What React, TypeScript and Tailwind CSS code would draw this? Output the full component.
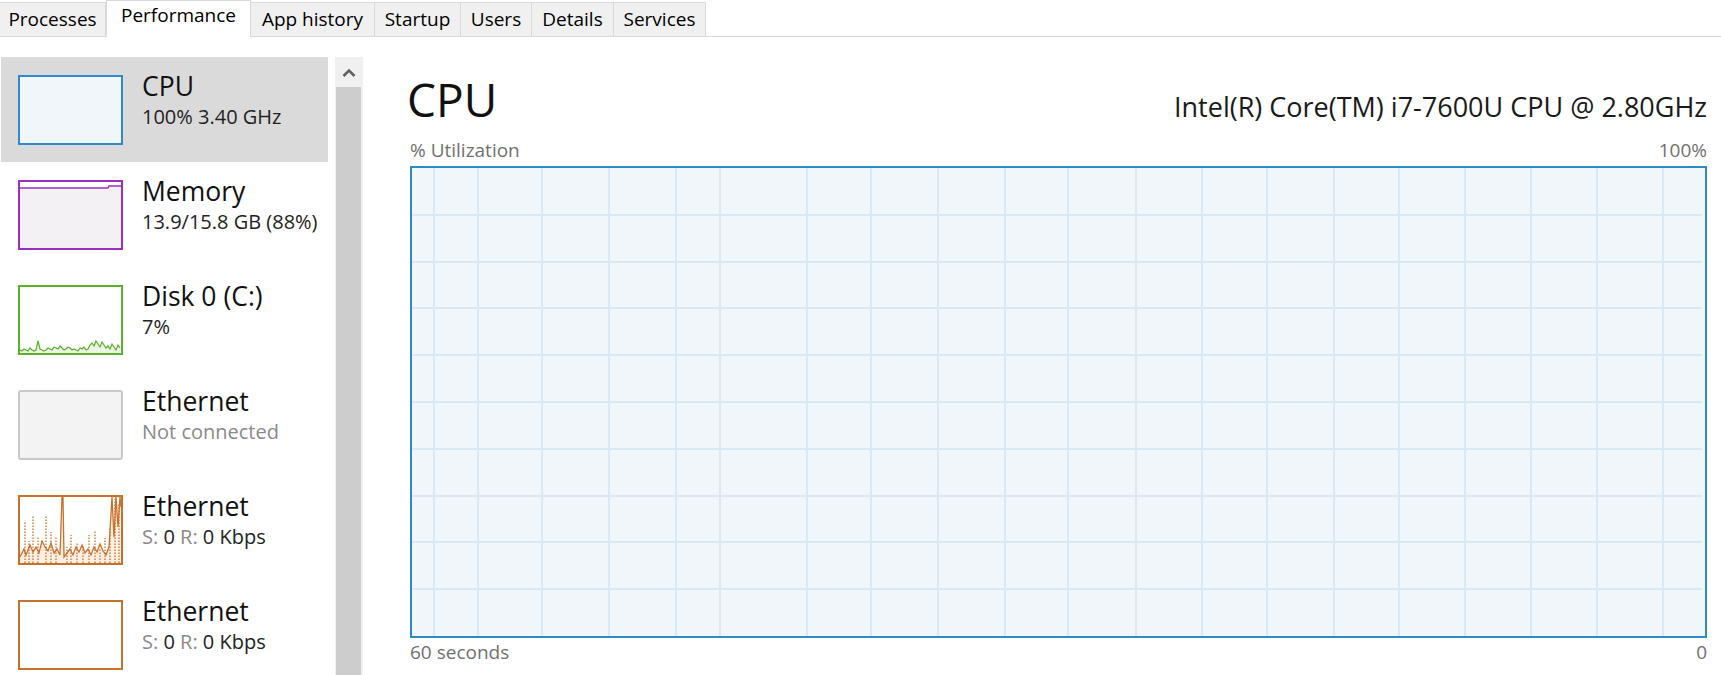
import React from "react";

const TABS = [
  { label: "Processes", w: "w-[106px]" },
  { label: "Performance", w: "w-[145px]", active: true },
  { label: "App history", w: "w-[124px]" },
  { label: "Startup", w: "w-[86px]" },
  { label: "Users", w: "w-[71px]" },
  { label: "Details", w: "w-[82px]" },
  { label: "Services", w: "w-[92px]" },
];

// grid positions inside the big chart (inner box 1293 x 468)
const VLINES = [22, 66, 130, 197, 264, 308, 395, 459, 526, 593, 656, 724, 790, 855, 922, 987, 1053, 1119, 1185, 1251];
const HLINES = [47, 94, 140, 187, 234, 281, 328, 374, 421];

const DISK = [3, 2, 4, 3, 2, 5, 3, 2, 3, 12, 4, 3, 2, 3, 5, 4, 3, 6, 5, 4, 7, 5, 3, 4, 6, 5, 3, 4, 3, 2, 5, 4, 6, 3, 4, 8, 10, 7, 12, 9, 6, 11, 8, 5, 7, 4, 9, 6, 3, 8, 5];

const ETH_SOLID: [number, number][] = [
  [0, 60], [4, 52], [6, 58], [10, 48], [13, 55], [16, 50], [19, 56], [22, 44], [25, 50], [28, 54],
  [31, 46], [34, 56], [37, 52], [40, 58], [42, 0], [43, 0], [44, 60], [47, 56], [50, 52], [53, 58],
  [56, 50], [59, 55], [62, 48], [65, 56], [68, 52], [71, 58], [74, 50], [77, 55], [80, 47], [83, 54],
  [86, 58], [89, 50], [92, 0], [94, 40], [96, 0], [98, 30], [100, 0], [101, 10],
];

const ETH_DOTTED: [number, number][] = [
  [5, 25], [9, 44], [13, 18], [18, 40], [26, 18], [31, 35], [36, 40], [47, 50], [51, 38], [57, 45],
  [63, 48], [69, 38], [75, 33], [80, 52], [85, 41], [90, 30], [95, 2], [99, 6],
];

function Thumb({ kind }: { kind: string }) {
  if (kind === "cpu") {
    return <div className="h-[70px] w-[105px] border-2 border-[#2e8bc8] bg-[#f1f6fa]" />;
  }
  if (kind === "mem") {
    return (
      <div className="h-[70px] w-[105px] border-2 border-[#9b2fbf] bg-white">
        <svg width="101" height="66" className="block">
          <polygon points="0,6 88,6 89,4 101,4 101,66 0,66" fill="#f4f1f5" />
          <polyline points="0,6 88,6 89,4 101,4" fill="none" stroke="#9b2fbf" strokeWidth="1.5" />
        </svg>
      </div>
    );
  }
  if (kind === "disk") {
    const pts = DISK.map((v, i) => `${i * 2},${66 - v}`).join(" ");
    return (
      <div className="h-[70px] w-[105px] border-2 border-[#5bb02a] bg-white">
        <svg width="101" height="66" className="block">
          <polygon points={`0,66 ${pts} 100,66`} fill="#edf6e4" />
          <polyline points={pts} fill="none" stroke="#5bb02a" strokeWidth="1.2" />
        </svg>
      </div>
    );
  }
  if (kind === "off") {
    return <div className="h-[70px] w-[105px] rounded-[3px] border-2 border-[#c9c9c9] bg-[#f3f3f3]" />;
  }
  if (kind === "eth") {
    const pts = ETH_SOLID.map(([x, y]) => `${x},${y}`).join(" ");
    return (
      <div className="h-[70px] w-[105px] border-2 border-[#c8712c] bg-white">
        <svg width="101" height="66" className="block">
          <polygon points={`0,66 ${pts} 101,66`} fill="#fcefe3" />
          {ETH_DOTTED.map(([x, y]) => (
            <line key={x} x1={x} y1={66} x2={x} y2={y} stroke="#d07a36" strokeWidth="1.4" strokeDasharray="1.5 1.5" />
          ))}
          <polyline points={pts} fill="none" stroke="#c8712c" strokeWidth="1.3" />
        </svg>
      </div>
    );
  }
  return <div className="h-[70px] w-[105px] border-2 border-[#c8712c] bg-white" />;
}

function NetSub() {
  return (
    <>
      <span className="text-[#8a8a8a]">S:</span> 0 <span className="text-[#8a8a8a]">R:</span> 0 Kbps
    </>
  );
}

const ITEMS = [
  { kind: "cpu", name: "CPU", sub: <>100% 3.40 GHz</>, selected: true },
  { kind: "mem", name: "Memory", sub: <>13.9/15.8 GB (88%)</> },
  { kind: "disk", name: "Disk 0 (C:)", sub: <>7%</> },
  { kind: "off", name: "Ethernet", sub: <span className="text-[#8a8a8a]">Not connected</span> },
  { kind: "eth", name: "Ethernet", sub: <NetSub /> },
  { kind: "eth2", name: "Ethernet", sub: <NetSub /> },
];

function SideItem({ item }: { item: (typeof ITEMS)[number] }) {
  return (
    <div className={`flex h-[105px] shrink-0 ${item.selected ? "bg-[#dadada]" : ""}`}>
      <div className="ml-[17px] mt-[18px]">
        <Thumb kind={item.kind} />
      </div>
      <div className="ml-[19px] pt-[16px]">
        <div className="text-[26.5px] leading-[26px] text-[#111]">{item.name}</div>
        <div className="mt-[8px] text-[20px] leading-[20px] text-[#222]">{item.sub}</div>
      </div>
    </div>
  );
}

export default function App() {
  return (
    <div className="flex h-[675px] w-[1721px] flex-col overflow-hidden bg-white font-['Open_Sans',sans-serif] text-black">
      <div className="flex h-[37px] shrink-0 items-end border-b border-[#d9d9d9]">
        {TABS.map((t) =>
          t.active ? (
            <div
              key={t.label}
              className={`relative -mb-px flex h-[37px] ${t.w} justify-center border-x border-t border-[#d9d9d9] bg-white pt-[5px] text-[19px] leading-[19px]`}
            >
              {t.label}
            </div>
          ) : (
            <div
              key={t.label}
              className={`flex h-[34px] ${t.w} items-center justify-center border-t border-r border-[#d9d9d9] bg-[#f0f0f0] text-[19px] leading-[19px]`}
            >
              {t.label}
            </div>
          )
        )}
      </div>

      <div className="flex min-h-0 flex-1">
        <div className="flex w-[335px] shrink-0 flex-col pl-[1px] pr-[7px] pt-[20px]">
          {ITEMS.map((it, i) => (
            <SideItem key={i} item={it} />
          ))}
        </div>

        <div className="mt-[20px] flex w-[28px] shrink-0 flex-col bg-[#f0f0f0]">
          <div className="flex h-[30px] items-center justify-center">
            <svg width="14" height="9" viewBox="0 0 14 9">
              <path d="M1.5 8 L7 2.5 L12.5 8" fill="none" stroke="#606060" strokeWidth="2.6" />
            </svg>
          </div>
          <div className="ml-[1px] w-[25px] flex-1 bg-[#cdcdcd]" />
        </div>

        <div className="flex min-w-0 flex-1 flex-col pl-[47px] pr-[14px] pt-[40px]">
          <div className="flex items-baseline justify-between">
            <div className="-ml-[3px] text-[46px] leading-[45px] text-[#111]">CPU</div>
            <div className="text-[27px] leading-[26px] text-[#1a1a1a]">Intel(R) Core(TM) i7-7600U CPU @ 2.80GHz</div>
          </div>

          <div className="mt-[19px] flex justify-between text-[19px] leading-[19px] text-[#707070]">
            <span>% Utilization</span>
            <span>100%</span>
          </div>

          <div className="mt-[6px] h-[472px] border-2 border-[#2e8bc8] bg-[#f1f6fa]">
            <svg width="1293" height="468" className="block">
              {HLINES.map((y) => (
                <line key={`h${y}`} x1={0} y1={y} x2={1290} y2={y} stroke="#d8e8f4" strokeWidth="2" />
              ))}
              {VLINES.map((x) => (
                <line key={`v${x}`} x1={x} y1={0} x2={x} y2={468} stroke="#d8e8f4" strokeWidth="2" />
              ))}
            </svg>
          </div>

          <div className="mt-[5px] flex justify-between text-[19px] leading-[19px] text-[#707070]">
            <span>60 seconds</span>
            <span>0</span>
          </div>
        </div>
      </div>
    </div>
  );
}
